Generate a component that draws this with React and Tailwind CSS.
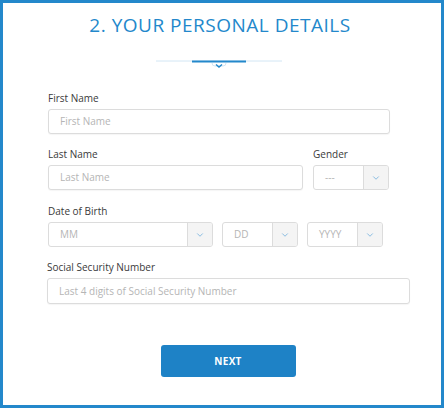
import { ChevronDown } from "lucide-react";

const font = { fontFamily: '"Open Sans", "Liberation Sans", sans-serif' };

function Label({ children, className = "" }) {
  return (
    <div className={`text-[10px] leading-[14px] text-[#3a3a3a] ${className}`}>
      {children}
    </div>
  );
}

function TextInput({ placeholder, className = "" }) {
  return (
    <div
      className={`flex items-center h-[25px] px-[11px] border border-[#dcdcdc] rounded-[3px] bg-white shadow-[0_1px_1px_rgba(0,0,0,0.04)] text-[10px] text-[#b5b5b5] ${className}`}
    >
      {placeholder}
    </div>
  );
}

function SelectBox({ value, className = "" }) {
  return (
    <div
      className={`flex h-[25px] border border-[#dcdcdc] rounded-[3px] bg-white overflow-hidden ${className}`}
    >
      <div className="flex-1 flex items-center px-[11px] text-[10px] text-[#b5b5b5]">
        {value}
      </div>
      <div className="w-[25px] flex items-center justify-center bg-[#f4f4f4] border-l border-[#dcdcdc]">
        <ChevronDown size={10} strokeWidth={1.5} className="text-[#4a9ad6]" />
      </div>
    </div>
  );
}

export default function App() {
  return (
    <div
      style={font}
      className="w-[444px] h-[408px] border-[3px] border-[#2388cb] bg-white flex flex-col"
    >
      {/* header */}
      <h1 className="mt-[9px] ml-[-4px] text-center text-[19px] leading-[26px] tracking-[0.5px] text-[#2388cb]">
        2. YOUR PERSONAL DETAILS
      </h1>

      <div className="mt-[22px] flex justify-center">
        <svg width="126" height="10" viewBox="0 0 126 10" className="ml-[-6px]">
          <line x1="0" y1="1" x2="126" y2="1" stroke="#d2e6f4" strokeWidth="1" />
          <line x1="36" y1="1.5" x2="90" y2="1.5" stroke="#2388cb" strokeWidth="2" />
          <path d="M56 3 q0 3 3 3 h8 q3 0 3 -3" fill="none" stroke="#d2e6f4" strokeWidth="1" />
          <path d="M60 4.5 l3 2.5 l3 -2.5" fill="none" stroke="#2388cb" strokeWidth="1.5" />
        </svg>
      </div>

      {/* form */}
      <div className="mt-[21px] pl-[45px] flex flex-col">
        <Label>First Name</Label>
        <TextInput placeholder="First Name" className="mt-[4px] w-[342px]" />

        <div className="mt-[13px] flex gap-[10px]">
          <div className="flex flex-col">
            <Label>Last Name</Label>
            <TextInput placeholder="Last Name" className="mt-[4px] w-[255px]" />
          </div>
          <div className="flex flex-col">
            <Label>Gender</Label>
            <SelectBox value="---" className="mt-[4px] w-[76px]" />
          </div>
        </div>

        <Label className="mt-[14px]">Date of Birth</Label>
        <div className="mt-[4px] flex gap-[9px]">
          <SelectBox value="MM" className="w-[165px]" />
          <SelectBox value="DD" className="w-[76px]" />
          <SelectBox value="YYYY" className="w-[76px]" />
        </div>

        <Label className="mt-[13px] ml-[-1px]">Social Security Number</Label>
        <TextInput
          placeholder="Last 4 digits of Social Security Number"
          className="mt-[4px] ml-[-1px] w-[363px] h-[26px]"
        />
      </div>

      <div className="mt-[41px] flex justify-center">
        <button className="ml-[12px] w-[135px] h-[32px] rounded-[3px] bg-[#1e82c6] text-white text-[10px] font-bold tracking-[0.3px]">
          NEXT
        </button>
      </div>
    </div>
  );
}
